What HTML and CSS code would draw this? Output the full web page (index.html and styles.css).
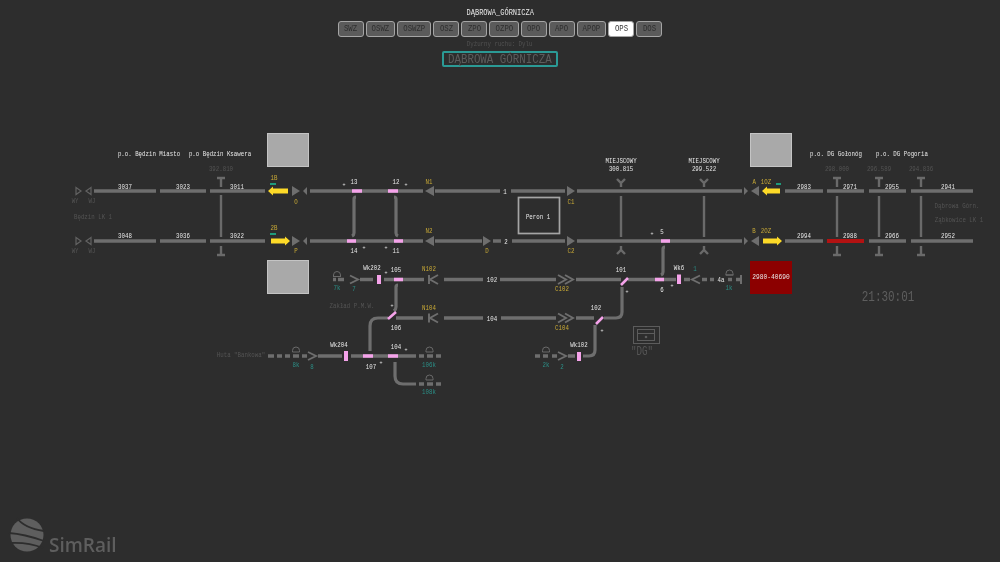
FILE: index.html
```html
<!DOCTYPE html>
<html lang="pl">
<head>
<meta charset="utf-8">
<title>SimRail - Dąbrowa Górnicza</title>
<link rel="stylesheet" href="styles.css">
</head>
<body>
<header class="top">
  <div class="post"><span>DĄBROWA_GÓRNICZA</span></div>
  <nav class="modes">
    <button class="mode m-sm"><span>SWZ</span></button>
    <button class="mode m-md"><span>OSWZ</span></button>
    <button class="mode m-lg"><span>OSWZP</span></button>
    <button class="mode m-sm"><span>OSZ</span></button>
    <button class="mode m-sm"><span>ZPO</span></button>
    <button class="mode m-md"><span>OZPO</span></button>
    <button class="mode m-sm"><span>OPO</span></button>
    <button class="mode m-sm"><span>APO</span></button>
    <button class="mode m-md"><span>APOP</span></button>
    <button class="mode m-sm active"><span>OPS</span></button>
    <button class="mode m-sm"><span>DOS</span></button>
  </nav>
  <div class="duty"><span>Dyżurny ruchu: Dylu</span></div>
  <div class="station"><span>DĄBROWA GÓRNICZA</span></div>
</header>

<svg class="stage" viewBox="0 0 1000 562" width="1000" height="562" aria-label="Schemat stacji">
  <!-- grey squares -->
  <rect class="sq" x="267.5" y="133.5" width="41" height="33"/>
  <rect class="sq" x="267.5" y="260.5" width="41" height="33"/>
  <rect class="sq" x="750.5" y="133.5" width="41" height="33"/>

  <!-- main tracks -->
  <g class="trk">
    <path d="M94 191H156M160 191H206M210 191H265M310 191H423M435 191H500M511 191H565M577 191H742M785 191H823M827 191H864M869 191H906M911 191H973"/>
    <path d="M94 241H156M160 241H206M210 241H265M310 241H423M435 241H482M493 241H501M512 241H565M577 241H742M785 241H823M869 241H906M911 241H973"/>
    <path d="M360 279.5H373M384 279.5H424M444 279.5H483M500 279.5H556M576 279.5H621M628 279.5H676M684 279.5H690"/>
    <path d="M396 318H423M444 318H483M501 318H556M576 318H594"/>
    <path d="M318 356H342M351 356H416"/>
    <path d="M568 356H575"/>
    <!-- dashes -->
    <path d="M333 279.5H336M338 279.5H344M702 279.5H707M710 279.5H714M728 279.5H732M736 279.5H741"/>
    <path d="M268 356H274M277 356H282M285 356H290M293 356H299M302 356H307M419 356H424M427 356H433M436 356H441"/>
    <path d="M419 384H424M427 384H433M436 384H441M535 356H540M543 356H548M552 356H557"/>
  </g>
  <rect class="red" x="827" y="239" width="37" height="4"/>

  <!-- curved connections -->
  <g class="curve">
    <path d="M356 197Q354 197 354 199V233Q354 235 352 236"/>
    <path d="M394 197Q396 197 396 199V233Q396 235 398 236"/>
    <path d="M665 247Q663 247 663 249V272Q663 274 661 275"/>
    <path d="M398 285Q396 285 396 287V307Q396 309 394 311"/>
    <path d="M370 351V326Q370 318 378 318H388"/>
    <path d="M604 318H616Q622 318 622 312V287"/>
    <path d="M583 356H589Q595 356 595 350V325"/>
    <path d="M395 362V376Q395 384 403 384H416"/>
  </g>

  <!-- signal poles -->
  <g class="pole">
    <path d="M221 195V237M621 196V237M704 196V237M837 196V237M879 196V237M921 196V237"/>
    <path d="M217 178H225M221 178V187M217 255H225M221 246V255"/>
    <path d="M833 178H841M837 178V187M833 255H841M837 246V255"/>
    <path d="M875 178H883M879 178V187M875 255H883M879 246V255"/>
    <path d="M917 178H925M921 178V187M917 255H925M921 246V255"/>
    <path d="M617 179L621 183L625 179M621 183V187M617 254L621 250L625 254M621 250V246"/>
    <path d="M700 179L704 183L708 179M704 183V187M700 254L704 250L708 254M704 250V246"/>
  </g>

  <!-- solid signal triangles -->
  <g class="tri">
    <polygon points="292,186 300,191 292,196"/>
    <polygon points="307,187 303,191 307,195"/>
    <polygon points="292,236 300,241 292,246"/>
    <polygon points="307,237 303,241 307,245"/>
    <polygon points="434,186 425,191 434,196"/>
    <polygon points="434,236 425,241 434,246"/>
    <polygon points="483,236 491,241 483,246"/>
    <polygon points="567,186 575,191 567,196"/>
    <polygon points="567,236 575,241 567,246"/>
    <polygon points="744,187 748,191 744,195"/>
    <polygon points="759,186 751,191 759,196"/>
    <polygon points="744,237 748,241 744,245"/>
    <polygon points="759,236 751,241 759,246"/>
  </g>

  <!-- outlined signal triangles -->
  <g class="tri-o">
    <polygon points="76,187.5 81,191 76,194.5"/>
    <polygon points="91,187.5 86,191 91,194.5"/>
    <polygon points="76,237.5 81,241 76,244.5"/>
    <polygon points="91,237.5 86,241 91,244.5"/>
  </g>

  <!-- chevrons and stop marks -->
  <g class="chev">
    <path d="M350 275.5L358 279.5L350 283.5"/>
    <path d="M308 352L316 356L308 360"/>
    <path d="M558 352L566 356L558 360"/>
    <path d="M700 275.5L692 279.5L700 283.5"/>
    <path d="M558 275L566 279.5L558 284M565 275L573 279.5L565 284"/>
    <path d="M558 313.5L566 318L558 322.5M565 313.5L573 318L565 322.5"/>
    <path d="M429 275V284M438 275L430 279.5L438 284"/>
    <path d="M429 313.5V322.5M438 313.5L430 318L438 322.5"/>
    <path class="thin" d="M741 275V284"/>
  </g>

  <!-- domes -->
  <g class="dome">
    <path d="M333.5 276.5V275A3.5 3.5 0 0 1 340.5 275V276.5ZM333 276.5H341"/>
    <path d="M726 275V273.5A3.5 3.5 0 0 1 733 273.5V275ZM725.5 275H733.5"/>
    <path d="M292.5 352V350.5A3.5 3.5 0 0 1 299.5 350.5V352Z"/>
    <path d="M426 352V350.5A3.5 3.5 0 0 1 433 350.5V352Z"/>
    <path d="M426 380V378.5A3.5 3.5 0 0 1 433 378.5V380Z"/>
    <path d="M542.5 352V350.5A3.5 3.5 0 0 1 549.5 350.5V352Z"/>
  </g>

  <!-- switches -->
  <g class="pink">
    <path d="M352 191H362M388 191H398M347 241H356M394 241H403M661 241H670M394 279.5H403M655 279.5H664M363 356H373M388 356H398"/>
    <path class="d" d="M621 285L628 278M596 324L603 317M388 319L396 312"/>
    <path class="v" d="M379 275V284M679 274.500V284M346 351V361M579 352V361"/>
  </g>

  <!-- yellow route arrows -->
  <g class="arrow">
    <polygon points="268,191 273,186.500 273,188.500 288,188.500 288,193.500 273,193.500 273,195.500"/>
    <polygon points="290,241 285,236.500 285,238.500 271,238.500 271,243.500 285,243.500 285,245.500"/>
    <polygon points="762,191 767,186.500 767,188.500 780,188.500 780,193.500 767,193.500 767,195.500"/>
    <polygon points="782,241 777,236.500 777,238.500 763,238.500 763,243.500 777,243.500 777,245.500"/>
  </g>
  <g class="tealdash">
    <rect x="270" y="183" width="6" height="2"/>
    <rect x="270" y="233" width="6" height="2"/>
    <rect x="776" y="183" width="5" height="2"/>
  </g>

  <!-- platform -->
  <rect class="platform" x="518.500" y="197.500" width="41" height="36"/>
  <text class="t white" x="538" y="217">Peron 1</text>

  <!-- failure box -->
  <rect class="fail" x="750" y="261" width="42" height="33"/>
  <text class="t white wide" x="771" y="277">2980-40690</text>

  <!-- DG icon -->
  <g class="dg">
    <rect x="633.500" y="326.500" width="26" height="17"/>
    <rect class="in" x="637.500" y="329.500" width="17" height="11"/>
    <path class="in" d="M638 333.500H654"/>
    <circle cx="646" cy="337" r="1.300"/>
  </g>
  <text class="t dgt" x="642" y="352">"DG"</text>

  <!-- white labels -->
  <g class="t white">
    <text x="149" y="154">p.o. Będzin Miasto</text>
    <text x="220" y="154">p.o Będzin Ksawera</text>
    <text x="621" y="161">MIEJSCOWY</text>
    <text x="621" y="169">300.815</text>
    <text x="704" y="161">MIEJSCOWY</text>
    <text x="704" y="169">299.522</text>
    <text x="836" y="154">p.o. DG Gołonóg</text>
    <text x="902" y="154">p.o. DG Pogoria</text>
    <text x="125" y="187">3037</text>
    <text x="183" y="187">3023</text>
    <text x="237" y="187">3011</text>
    <text x="125" y="236">3048</text>
    <text x="183" y="236">3036</text>
    <text x="237" y="236">3022</text>
    <text x="804" y="187">2983</text>
    <text x="850" y="187">2971</text>
    <text x="892" y="187">2955</text>
    <text x="948" y="187">2941</text>
    <text x="804" y="236">2994</text>
    <text x="850" y="236">2988</text>
    <text x="892" y="236">2966</text>
    <text x="948" y="236">2952</text>
    <text x="354" y="182">13</text>
    <text x="396" y="182">12</text>
    <text x="354" y="251">14</text>
    <text x="396" y="251">11</text>
    <text x="505" y="192">1</text>
    <text x="506" y="242">2</text>
    <text x="662" y="232">5</text>
    <text x="662" y="290">6</text>
    <text x="621" y="270">101</text>
    <text x="372" y="268">Wk202</text>
    <text x="396" y="270">105</text>
    <text x="492" y="280">102</text>
    <text x="492" y="319">104</text>
    <text x="679" y="268">Wk6</text>
    <text x="721" y="280">4a</text>
    <text x="396" y="328">106</text>
    <text x="396" y="347">104</text>
    <text x="371" y="367">107</text>
    <text x="339" y="345">Wk204</text>
    <text x="596" y="308">102</text>
    <text x="579" y="345">Wk102</text>
  </g>

  <!-- switch plus marks -->
  <g class="t white plus">
    <text x="344" y="185">+</text>
    <text x="406" y="185">+</text>
    <text x="364" y="248">+</text>
    <text x="386" y="248">+</text>
    <text x="652" y="234">+</text>
    <text x="627" y="292">+</text>
    <text x="672" y="286">+</text>
    <text x="386" y="273">+</text>
    <text x="392" y="306">+</text>
    <text x="406" y="350">+</text>
    <text x="381" y="363">+</text>
    <text x="602" y="331">+</text>
  </g>

  <!-- yellow labels -->
  <g class="t amber">
    <text x="274" y="178">1B</text>
    <text x="274" y="228">2B</text>
    <text x="296" y="202">O</text>
    <text x="296" y="251">P</text>
    <text x="429" y="182">N1</text>
    <text x="429" y="231">N2</text>
    <text x="487" y="251">D</text>
    <text x="571" y="202">C1</text>
    <text x="571" y="251">C2</text>
    <text x="754" y="182">A</text>
    <text x="766" y="182">1OZ</text>
    <text x="754" y="231">B</text>
    <text x="766" y="231">2OZ</text>
    <text x="429" y="269">N102</text>
    <text x="429" y="308">N104</text>
    <text x="562" y="289">C102</text>
    <text x="562" y="328">C104</text>
  </g>

  <!-- teal labels -->
  <g class="t teal">
    <text x="337" y="288">7k</text>
    <text x="354" y="289">7</text>
    <text x="695" y="269">1</text>
    <text x="729" y="288">1k</text>
    <text x="296" y="365">8k</text>
    <text x="312" y="367">8</text>
    <text x="429" y="365">106k</text>
    <text x="429" y="392">108k</text>
    <text x="546" y="365">2k</text>
    <text x="562" y="367">2</text>
  </g>

  <!-- dim labels -->
  <g class="t dim">
    <text x="221" y="169">392.810</text>
    <text x="837" y="169">298.000</text>
    <text x="879" y="169">296.589</text>
    <text x="921" y="169">294.836</text>
    <text x="75" y="201">WY</text>
    <text x="92" y="201">WJ</text>
    <text x="75" y="251">WY</text>
    <text x="92" y="251">WJ</text>
    <text x="93" y="217">Będzin LK 1</text>
    <text x="957" y="206">Dąbrowa Górn.</text>
    <text x="959" y="220">Ząbkowice LK 1</text>
    <text x="352" y="306">Zakład P.M.W.</text>
    <text x="241" y="355">Huta "Bankowa"</text>
  </g>

  <text class="clock" x="888" y="297">21:30:01</text>

  <!-- logo -->
  <g class="logo">
    <circle cx="27" cy="535" r="16.500"/>
    <path class="cut" d="M17 518Q24 528 44 531M9 533Q24 534 44 541M10 543Q28 542 43 548"/>
    <text x="49" y="552">SimRail</text>
  </g>
</svg>
</body>
</html>
```

FILE: styles.css
```css
html, body {
  margin: 0;
  padding: 0;
}

body {
  position: relative;
  width: 1000px;
  height: 562px;
  overflow: hidden;
  background: #2d2d2d;
  font-family: "Liberation Mono", monospace;
}

.top {
  position: relative;
  z-index: 1;
  display: flex;
  flex-direction: column;
  align-items: center;
  padding-top: 9px;
  color: #e6e6e6;
  filter: blur(0.3px);
}

.post span,
.mode span,
.duty span,
.station span {
  display: inline-block;
  white-space: nowrap;
}

.post {
  font-size: 9px;
  line-height: 8px;
}

.post span { transform: scaleX(0.78); }

.modes {
  display: flex;
  gap: 2px;
  margin-top: 4px;
}

.mode {
  height: 16px;
  padding: 0;
  border: 1px solid #a5a5a5;
  border-radius: 3px;
  background: #5b5b5b;
  color: #2e2e2e;
  font: 9.500px/14px "Liberation Mono", monospace;
  overflow: hidden;
}

.mode span { transform: scaleX(0.77); }

.m-sm { width: 26px; }
.m-md { width: 29.500px; }
.m-lg { width: 34px; }

.mode.active {
  background: #fff;
  color: #3a3a3a;
}

.duty {
  margin-top: 3px;
  font-size: 8px;
  line-height: 8px;
  color: #525252;
}

.duty span { transform: scaleX(0.72); }

.station {
  box-sizing: border-box;
  display: flex;
  justify-content: center;
  width: 116px;
  height: 16px;
  margin-top: 3px;
  border: 2px solid #2b9a95;
  border-radius: 2px;
  color: #5c5c5c;
  font-size: 13.500px;
  line-height: 14px;
}

.station span { transform: scaleX(0.8); }

.stage {
  position: absolute;
  left: 0;
  top: 0;
  filter: blur(0.3px);
}

.sq {
  fill: #a9a9a9;
  stroke: #c4c4c4;
  stroke-width: 1;
}

.trk path {
  fill: none;
  stroke: #6e6e6e;
  stroke-width: 3.5;
}

.red { fill: #b31212; }

.curve path {
  fill: none;
  stroke: #6e6e6e;
  stroke-width: 3.2;
}

.pole path {
  fill: none;
  stroke: #6a6a6a;
  stroke-width: 2.4;
}

.tri polygon { fill: #6e6e6e; }

.tri-o polygon {
  fill: none;
  stroke: #626262;
  stroke-width: 1.2;
}

.chev path {
  fill: none;
  stroke: #6e6e6e;
  stroke-width: 1.9;
}

.chev .thin { stroke-width: 2; }

.dome path {
  fill: none;
  stroke: #6a6a6a;
  stroke-width: 1;
}

.pink path {
  fill: none;
  stroke: #f5a3ea;
  stroke-width: 3.5;
}

.pink .v { stroke-width: 4; }
.pink .d { stroke-width: 2.6; }

.arrow polygon { fill: #fdda28; }

.tealdash rect { fill: #1f9b7c; }

.platform {
  fill: none;
  stroke: #a5a5a5;
  stroke-width: 1.7;
}

.fail { fill: #8c0000; }

.dg rect {
  fill: none;
  stroke: #5c5c5c;
  stroke-width: 1;
}

.dg .in {
  fill: none;
  stroke: #5c5c5c;
  stroke-width: 1;
}

.dg circle { fill: #5c5c5c; }

text.t,
.t text,
.clock {
  font-family: "Liberation Mono", monospace;
  text-anchor: middle;
  dominant-baseline: central;
  transform-box: fill-box;
  transform-origin: center;
}

text.t,
.t text {
  font-size: 8px;
  transform: scaleX(0.72);
}

.t.plus text {
  font-size: 5px;
  transform: none;
}

text.t.wide { transform: scaleX(0.78); }

.white, .white text { fill: #e8e8e8; }
.amber text { fill: #c9aa36; }
.teal text { fill: #2b8f87; }
.dim text { fill: #545454; }

text.t.dgt {
  fill: #565656;
  font-size: 12px;
  transform: scaleX(0.76);
}

.clock {
  fill: #5e5e5e;
  font-size: 15px;
  transform: scaleX(0.73);
}

.logo circle { fill: #5e5e5e; }

.logo .cut {
  fill: none;
  stroke: #2d2d2d;
  stroke-width: 1.8;
}

.logo text {
  fill: #5e5e5e;
  font-family: "Open Sans", sans-serif;
  font-size: 19px;
  font-weight: 600;
}
```
